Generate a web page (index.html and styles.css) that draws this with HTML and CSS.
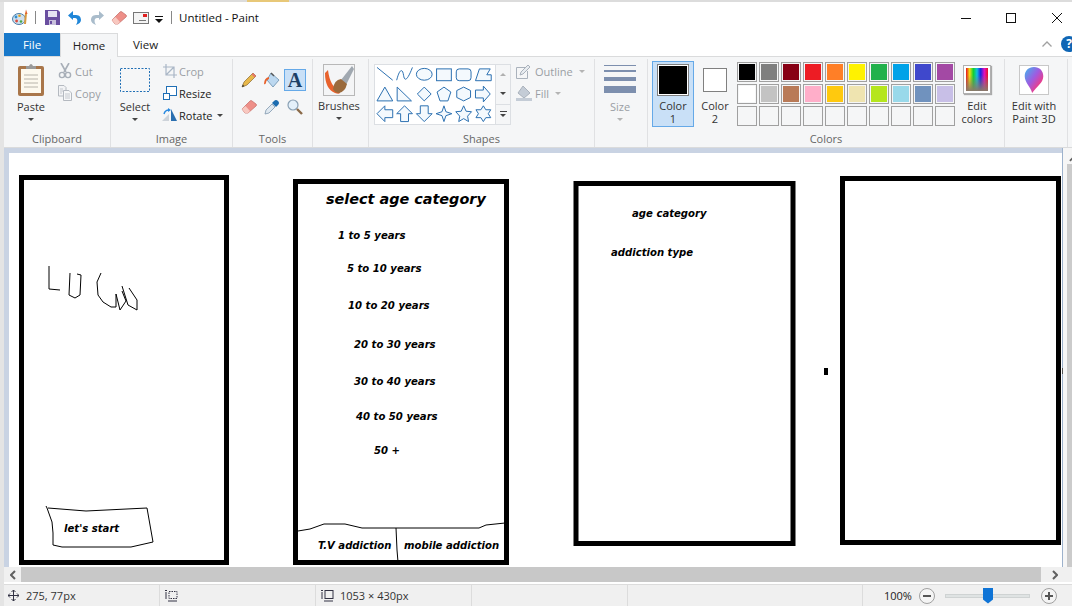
FILE: index.html
```html
<!DOCTYPE html>
<html lang="en">
<head>
  <meta charset="UTF-8">
  <title>Untitled - Paint</title>
  <link rel="stylesheet" href="styles.css">
</head>
<body>

<div class="desktop-strip"><span class="gold"></span></div>

<div class="window">

  <!-- title bar -->
  <div class="titlebar">
    <svg class="qa qa-app" viewBox="0 0 17 17">
      <ellipse cx="7" cy="10" rx="6.5" ry="5.5" fill="#cfe0ee" stroke="#4d7ea8"/>
      <circle cx="4" cy="8" r="1.4" fill="#2f8fd0"/><circle cx="7.5" cy="6.8" r="1.3" fill="#e0a020"/>
      <circle cx="4.6" cy="12" r="1.4" fill="#d8483a"/><circle cx="9" cy="12.5" r="1.3" fill="#4aa84a"/>
      <path d="M13 15 L14 4" stroke="#d89a40" stroke-width="2"/><path d="M13 5 L14 0.5 L15.5 5Z" fill="#e2622c"/>
    </svg>
    <span class="qa-sep"></span>
    <svg class="qa qa-save" viewBox="0 0 15 15">
      <path d="M0 0H13L15 2V15H0Z" fill="#6a4fa0"/>
      <rect x="3" y="1" width="9" height="6" fill="#e6e2f2"/>
      <rect x="4" y="10" width="7" height="5" fill="#c8c0dc"/><rect x="5" y="11" width="2" height="3" fill="#6a4fa0"/>
    </svg>
    <svg class="qa qa-undo" viewBox="0 0 14 15">
      <path d="M1 5 H8 C12 5 13 8 13 10 C13 12 11 14 8 15 C10 12 10 8 7 8 H5 V10 L0 5.5 L5 1 V5" fill="#1f86d8"/>
    </svg>
    <svg class="qa qa-redo" viewBox="0 0 14 15">
      <path d="M13 5 H6 C2 5 1 8 1 10 C1 12 3 14 6 15 C4 12 4 8 7 8 H9 V10 L14 5.5 L9 1 V5" fill="#a9bccb"/>
    </svg>
    <svg class="qa qa-erase" viewBox="0 0 16 14">
      <path d="M1 9 L9 1 Q10 0 11 1 L15 4 Q16 5 15 6 L7 13 H4 Z" fill="#ee8f88" stroke="#c9736e" stroke-width=".8"/>
      <path d="M1 9 L4 13 H7 L9 11 L4.5 6Z" fill="#f8c8c0"/>
    </svg>
    <svg class="qa qa-win" viewBox="0 0 16 12">
      <rect x=".5" y=".5" width="15" height="11" fill="#f4f4f4" stroke="#777"/>
      <rect x="10" y="2" width="4" height="3" fill="#e02020"/><path d="M6 8.5H13" stroke="#777"/>
    </svg>
    <span class="qa-menu"><i></i><b></b></span>
    <span class="qa-sep qa-sep-2"></span>
    <span class="title">Untitled - Paint</span>
    <div class="win-controls">
      <svg class="wc wc-min" viewBox="0 0 10 10"><path d="M0 5.5H10" stroke="#111"/></svg>
      <svg class="wc wc-max" viewBox="0 0 10 10"><rect x=".5" y=".5" width="9" height="9" fill="none" stroke="#111"/></svg>
      <svg class="wc wc-close" viewBox="0 0 10 10"><path d="M0 0L10 10M10 0L0 10" stroke="#111"/></svg>
    </div>
  </div>

  <!-- tabs -->
  <div class="tabs">
    <span class="tab tab-file">File</span>
    <span class="tab tab-home">Home</span>
    <span class="tab tab-view">View</span>
    <svg class="collapse" viewBox="0 0 10 6"><path d="M0.5 5.5L5 1L9.5 5.5" fill="none" stroke="#a0a0a0" stroke-width="1.3"/></svg>
    <span class="help">?</span>
  </div>

  <!-- ribbon -->
  <div class="ribbon">

    <div class="group g-clipboard">
      <div class="group-body">
        <div class="big big-paste">
          <svg class="ic-paste" viewBox="0 0 26 33">
            <rect x="0" y="3" width="26" height="30" rx="2" fill="#a9764a"/>
            <rect x="3" y="6" width="20" height="24" fill="#fdf9ee"/>
            <path d="M6 12H20M6 16H20M6 20H20M6 24H20" stroke="#b8b4aa"/>
            <path d="M8 6V3H11Q13 -1 15 3H18V6Z" fill="#9a9a9a"/>
          </svg>
          <span class="lbl">Paste</span>
          <i class="caret"></i>
        </div>
        <div class="stack">
          <div class="small off">
            <svg class="ic16" viewBox="0 0 16 16">
              <path d="M4 0L9 9M12 0L7 9" stroke="#a8afb8" stroke-width="1.6"/>
              <circle cx="5" cy="12" r="2.6" fill="none" stroke="#a8afb8" stroke-width="1.4"/>
              <circle cx="11" cy="12" r="2.6" fill="none" stroke="#a8afb8" stroke-width="1.4"/>
            </svg>
            <span>Cut</span>
          </div>
          <div class="small off">
            <svg class="ic16" viewBox="0 0 16 16">
              <path d="M1.5 .5H7L9 2.5V11H1.5Z" fill="#f2f3f5" stroke="#b4b9c0"/>
              <path d="M6.5 5.5H12L14.5 8V15.5H6.5Z" fill="#f6f7f8" stroke="#b4b9c0"/>
              <path d="M8 9H13M8 11H13M8 13H13M3 4H6M3 6H6M3 8H5" stroke="#c4c8ce"/>
            </svg>
            <span>Copy</span>
          </div>
        </div>
      </div>
      <div class="group-label">Clipboard</div>
    </div>

    <div class="group g-image">
      <div class="group-body">
        <div class="big big-select">
          <svg class="ic-select" viewBox="0 0 30 24"><rect x=".5" y=".5" width="29" height="23" fill="none" stroke="#1f6fb5" stroke-dasharray="2 1.5"/></svg>
          <span class="lbl">Select</span>
          <i class="caret"></i>
        </div>
        <div class="stack">
          <div class="small off">
            <svg class="ic16" viewBox="0 0 16 16"><path d="M4 1V12H15M1 4H12V15M4 12L12 4" fill="none" stroke="#a9b6c6" stroke-width="1.2"/></svg>
            <span>Crop</span>
          </div>
          <div class="small">
            <svg class="ic16" viewBox="0 0 16 16">
              <rect x="4.5" y="1.5" width="10" height="9" fill="#fff" stroke="#1f6fb5"/>
              <rect x="1.5" y="8.5" width="6" height="6" fill="#fff" stroke="#1f6fb5"/>
            </svg>
            <span>Resize</span>
          </div>
          <div class="small">
            <svg class="ic16" viewBox="0 0 16 16">
              <path d="M9 2L15 14H9Z" fill="#2a6fb0"/><path d="M0 14L7 7V14Z" fill="#cdd3da"/>
              <path d="M2 7Q3 3 7 3" fill="none" stroke="#2a8ae0" stroke-width="1.4"/><path d="M6 1L9 3L6 5Z" fill="#2a8ae0"/>
            </svg>
            <span>Rotate</span>
            <i class="caret"></i>
          </div>
        </div>
      </div>
      <div class="group-label">Image</div>
    </div>

    <div class="group g-tools">
      <div class="group-body tool-grid">
        <span class="tool">
          <svg class="ic16" viewBox="0 0 16 16">
            <path d="M1 15L3 10L12 1L15 4L6 13Z" fill="#e8b84a" stroke="#8a6a30" stroke-width=".7"/>
            <path d="M12 1L15 4L13.6 5.4L10.6 2.4Z" fill="#e8766a"/><path d="M1 15L1.8 12.6L3.4 14.2Z" fill="#333"/>
          </svg>
        </span>
        <span class="tool">
          <svg class="ic16" viewBox="0 0 16 16">
            <path d="M7 1L15 8L9 15L3 8Z" fill="#bcd8f0" stroke="#7ea0bc"/>
            <path d="M7 1L10 4" stroke="#555" stroke-width="1.4"/>
            <path d="M5 5Q0 6 0 12Q1 13 2 11Q2 8 5 7Z" fill="#e8622c"/>
          </svg>
        </span>
        <span class="tool tool-on">A</span>
        <span class="tool">
          <svg class="ic16" viewBox="0 0 16 14">
            <path d="M1 9 L9 1 Q10 0 11 1 L15 4 Q16 5 15 6 L7 13 H4 Z" fill="#ee8f88" stroke="#c9736e" stroke-width=".8"/>
            <path d="M1 9 L4 13 H7 L9 11 L4.5 6Z" fill="#f8c8c0"/>
          </svg>
        </span>
        <span class="tool">
          <svg class="ic16" viewBox="0 0 16 16">
            <path d="M1 15L2 11L8 5L11 8L5 14Z" fill="#dfe8f0" stroke="#8098ae" stroke-width=".8"/>
            <path d="M8 4L10 2Q12 0 14 2Q16 4 14 6L12 8L8 4Z" fill="#1c6cb0"/>
          </svg>
        </span>
        <span class="tool">
          <svg class="ic16" viewBox="0 0 16 16">
            <circle cx="6" cy="6" r="5" fill="#e4f0fa" stroke="#8aa0b4" stroke-width="1.2"/>
            <path d="M10 10L15 15" stroke="#8a6a48" stroke-width="2.4"/>
          </svg>
        </span>
      </div>
      <div class="group-label">Tools</div>
    </div>

    <div class="group g-brushes">
      <div class="group-body">
        <div class="big big-brushes">
          <svg class="ic-brushes" viewBox="0 0 32 32">
            <rect x=".5" y=".5" width="31" height="31" fill="#f4f5f6" stroke="#b8b8b8"/>
            <path d="M2 9Q2 25 12 29Q18 31 17 27Q7 23 5 6Z" fill="#e8622c"/>
            <path d="M18 16L29 2L31 5L23 21Z" fill="#a0a8b0"/>
            <path d="M10 25Q11 16 18 15L24 20Q22 28 16 29Q12 29 10 25Z" fill="#9a6a3c"/>
          </svg>
          <span class="lbl">Brushes</span>
          <i class="caret"></i>
        </div>
      </div>
      <div class="group-label"></div>
    </div>

    <div class="group g-shapes">
      <div class="group-body">
        <div class="shape-box">
          <svg class="shape-grid" viewBox="375 64 120 60">
            <path d="M377 67L393 80"/>
            <path d="M397 80C400 68 403 68 404 75S408 80 413 67"/>
            <ellipse cx="425" cy="74" rx="8" ry="6"/>
            <rect x="437.5" y="68.5" width="15" height="12"/>
            <rect x="457.5" y="68.5" width="15" height="12" rx="3"/>
            <path d="M477 80.5L481 68.5H492L488.5 74.5H493V80.5Z"/>
            <path d="M385 87L377 101H393Z"/>
            <path d="M397.5 87V101H412Z"/>
            <path d="M425 87L432 94L425 101L418 94Z"/>
            <path d="M445 87L452 92L449 101H441L438 92Z"/>
            <path d="M465 87L472 90.5V97.5L465 101L458 97.5V90.5Z"/>
            <path d="M477 90H485V86L492 94L485 102V98H477Z"/>
            <path d="M393 110H385V106L377 114L385 122V118H393Z"/>
            <path d="M405 106L413 114H409V122H401V114H397Z"/>
            <path d="M421 106H429V114H433L425 122L417 114H421Z"/>
            <path d="M445 106L447 112L453 114L447 116L445 122L443 116L437 114L443 112Z"/>
            <path d="M465 106L467.5 111.5L473 112L469 116.5L470 122L465 119L460 122L461 116.5L457 112L462.5 111.5Z"/>
            <path d="M485 106L487.5 110H492.5L490 114L492.5 118H487.5L485 122L482.5 118H477.5L480 114L477.5 110H482.5Z"/>
          </svg>
          <div class="shape-scroll">
            <span class="ss"><i class="caret caret-up"></i></span>
            <span class="ss"><i class="caret"></i></span>
            <span class="ss ss-more"><b></b><i class="caret"></i></span>
          </div>
        </div>
        <div class="stack stack-shapes">
          <div class="small off">
            <svg class="ic16" viewBox="0 0 16 16">
              <path d="M.5 4.5H9M.5 4.5V15.5H11.5V8" fill="none" stroke="#aab2bc"/>
              <path d="M4 12L5 9L12 2L14 4L7 11Z" fill="#e8ecf0" stroke="#aab2bc"/>
            </svg>
            <span>Outline</span>
            <i class="caret"></i>
          </div>
          <div class="small off">
            <svg class="ic16" viewBox="0 0 16 16">
              <path d="M7 1L14 8L8 13L2 8Z" fill="#c4ccd6" stroke="#aab2bc"/>
              <rect x="0" y="13" width="16" height="3" fill="#c4ccd6"/>
            </svg>
            <span>Fill</span>
            <i class="caret"></i>
          </div>
        </div>
      </div>
      <div class="group-label">Shapes</div>
    </div>

    <div class="group g-size">
      <div class="group-body">
        <div class="big big-size off">
          <div class="size-lines"><i class="s1"></i><i class="s2"></i><i class="s3"></i><i class="s4"></i></div>
          <span class="lbl">Size</span>
          <i class="caret"></i>
        </div>
      </div>
      <div class="group-label"></div>
    </div>

    <div class="group g-colors">
      <div class="group-body">
        <div class="color-btn color-on">
          <span class="sw sw-1"><i></i></span>
          <span class="lbl">Color<br>1</span>
        </div>
        <div class="color-btn color-2">
          <span class="sw sw-2"><i></i></span>
          <span class="lbl">Color<br>2</span>
        </div>
        <div class="palette">
          <span class="cell"><i class="c1"></i></span><span class="cell"><i class="c2"></i></span><span class="cell"><i class="c3"></i></span><span class="cell"><i class="c4"></i></span><span class="cell"><i class="c5"></i></span><span class="cell"><i class="c6"></i></span><span class="cell"><i class="c7"></i></span><span class="cell"><i class="c8"></i></span><span class="cell"><i class="c9"></i></span><span class="cell"><i class="c10"></i></span>
          <span class="cell"><i class="c11"></i></span><span class="cell"><i class="c12"></i></span><span class="cell"><i class="c13"></i></span><span class="cell"><i class="c14"></i></span><span class="cell"><i class="c15"></i></span><span class="cell"><i class="c16"></i></span><span class="cell"><i class="c17"></i></span><span class="cell"><i class="c18"></i></span><span class="cell"><i class="c19"></i></span><span class="cell"><i class="c20"></i></span>
          <span class="cell"></span><span class="cell"></span><span class="cell"></span><span class="cell"></span><span class="cell"></span><span class="cell"></span><span class="cell"></span><span class="cell"></span><span class="cell"></span><span class="cell"></span>
        </div>
        <div class="big big-edit">
          <span class="rainbow"><i></i></span>
          <span class="lbl">Edit<br>colors</span>
        </div>
      </div>
      <div class="group-label">Colors</div>
    </div>

    <div class="group g-3d">
      <div class="group-body">
        <div class="big big-3d">
          <span class="p3d-box">
            <svg class="ic-3d" viewBox="0 0 20 28">
              <defs>
                <linearGradient id="drop" x1="0" y1="0" x2="1" y2="1">
                  <stop offset="0" stop-color="#3cb8ee"/><stop offset=".45" stop-color="#a05ae0"/>
                  <stop offset=".75" stop-color="#ee3c88"/><stop offset="1" stop-color="#f8a030"/>
                </linearGradient>
              </defs>
              <path d="M10 0C16 0 20 4 20 10C20 17 13 21 8 28C7 22 0 17 0 10C0 4 4 0 10 0Z" fill="url(#drop)"/>
            </svg>
          </span>
          <span class="lbl">Edit with<br>Paint 3D</span>
        </div>
      </div>
      <div class="group-label"></div>
    </div>

  </div>

  <!-- canvas area -->
  <div class="workspace">
    <div class="canvas-pane">
      <div class="canvas">
        <svg class="drawing" width="1053" height="430" viewBox="9 153 1053 430">
          <g class="frames">
            <rect x="21.5" y="177.5" width="205" height="385"/>
            <rect x="295.5" y="181.5" width="211" height="381"/>
            <rect x="576" y="183.5" width="217" height="360"/>
            <rect x="842.5" y="178.5" width="216" height="364"/>
          </g>
          <rect class="tick" x="824" y="368" width="4" height="7"/>
          <g class="pencil">
            <path d="M49 266V289L60 290"/>
            <path d="M70 273L69 295L75 298L80 295L81 275L77 274"/>
            <path d="M101 273L97 282L98 295L103 302L111 307L116 307L116 294L120 310L126 301L122 291M122 286L128 305L137 310L137 300L129 288"/>
            <path d="M46 506L47 508L52 522L53 533L53 545L62 547L131 547L153 542L147 508L86 511L48 508"/>
            <path d="M298 531L310 529L324 524L345 524L362 528L479 528L486 525L505 523"/>
            <path d="M396 528L397 550L398 562"/>
          </g>
          <text class="big-text" x="326" y="204">select age category</text>
          <g class="sk-text">
            <text x="338" y="239">1 to 5 years</text>
            <text x="347" y="272">5 to 10 years</text>
            <text x="348" y="309">10 to 20 years</text>
            <text x="354" y="348">20 to 30 years</text>
            <text x="354" y="385">30 to 40 years</text>
            <text x="356" y="420">40 to 50 years</text>
            <text x="374" y="454">50 +</text>
            <text x="64" y="532">let's start</text>
            <text x="318" y="549">T.V addiction</text>
            <text x="404" y="549">mobile addiction</text>
            <text x="632" y="217">age category</text>
            <text x="611" y="256">addiction type</text>
          </g>
        </svg>
      </div>
    </div>
    <span class="handle"></span>
    <div class="vscroll">
      <svg class="arrow-up" viewBox="0 0 10 6"><path d="M1 5L5 1L9 5" fill="none" stroke="#606060" stroke-width="2"/></svg>
      <span class="vthumb"></span>
    </div>
  </div>

  <div class="hscroll">
    <span class="harrow">
      <svg viewBox="0 0 6 10"><path d="M5 1L1 5L5 9" fill="none" stroke="#606060" stroke-width="2"/></svg>
    </span>
    <span class="hthumb"></span>
    <span class="harrow harrow-r">
      <svg viewBox="0 0 6 10"><path d="M1 1L5 5L1 9" fill="none" stroke="#606060" stroke-width="2"/></svg>
    </span>
  </div>

  <!-- status bar -->
  <div class="status">
    <div class="st st-pos">
      <svg class="st-ic" viewBox="0 0 11 11"><path d="M5.5 0V11M0 5.5H11M3.5 2L5.5 0L7.5 2M3.5 9L5.5 11L7.5 9M2 3.5L0 5.5L2 7.5M9 3.5L11 5.5L9 7.5" fill="none" stroke="#334"/></svg>
      <span>275, 77px</span>
    </div>
    <div class="st st-sel">
      <svg class="st-ic2" viewBox="0 0 13 13"><path d="M1 3V10M0 2L1 1L2 2" fill="none" stroke="#334"/><rect x="4" y="2.5" width="8" height="7" fill="none" stroke="#334" stroke-dasharray="1.5 1"/><path d="M3 12H12" stroke="#334"/></svg>
    </div>
    <div class="st st-size">
      <svg class="st-ic2" viewBox="0 0 13 13"><path d="M1 3V10M0 2L1 1L2 2" fill="none" stroke="#334"/><rect x="4" y="1.5" width="8" height="8" fill="none" stroke="#334"/><path d="M3 12H12" stroke="#334"/></svg>
      <span>1053 × 430px</span>
    </div>
    <div class="st st-empty"></div>
    <div class="st st-empty2"></div>
    <div class="st st-zoom">
      <span class="pct">100%</span>
      <svg class="zb" viewBox="0 0 16 16"><circle cx="8" cy="8" r="7.5" fill="#f4f4f4" stroke="#a0a0a0"/><path d="M4 8H12" stroke="#555" stroke-width="2"/></svg>
      <span class="slider"><i></i></span>
      <svg class="zb" viewBox="0 0 16 16"><circle cx="8" cy="8" r="7.5" fill="#f4f4f4" stroke="#a0a0a0"/><path d="M4 8H12M8 4V12" stroke="#555" stroke-width="2"/></svg>
    </div>
  </div>

</div>

</body>
</html>
```

FILE: styles.css
```css
* {
  box-sizing: border-box;
}
html, body {
  margin: 0;
  height: 606px;
  overflow: hidden;
}
body {
  background: #e4e4e4;
  font-family: "Open Sans", "Noto Sans", sans-serif;
  font-size: 11.5px;
  color: #222;
}
i {
  display: block;
}

.desktop-strip {
  height: 2px;
  background: #dcdcdc;
  display: flex;
}
.gold {
  width: 42px;
  margin-left: 247px;
  background: #e8c878;
}

.window {
  margin-left: 4px;
  height: 604px;
  background: #fff;
  display: flex;
  flex-direction: column;
}

/* title bar */
.titlebar {
  height: 31px;
  display: flex;
  align-items: center;
  padding-left: 8px;
  flex: none;
}
.qa {
  display: block;
  flex: none;
}
.qa-app { width: 17px; height: 17px; }
.qa-save { width: 15px; height: 15px; margin-left: 9px; }
.qa-undo { width: 14px; height: 15px; margin-left: 8px; }
.qa-redo { width: 14px; height: 15px; margin-left: 8px; }
.qa-erase { width: 16px; height: 14px; margin-left: 7px; }
.qa-win { width: 16px; height: 12px; margin-left: 6px; }
.qa-sep {
  width: 1px;
  height: 13px;
  background: #888;
  margin-left: 6px;
}
.qa-sep-2 {
  margin-left: 8px;
}
.qa-menu {
  width: 8px;
  margin-left: 6px;
  padding-top: 4px;
}
.qa-menu i {
  height: 1px;
  background: #111;
  margin-bottom: 2px;
}
.qa-menu b {
  display: block;
  width: 0;
  border: 4px solid transparent;
  border-top: 4px solid #111;
  border-bottom: 0;
}
.title {
  margin-left: 7px;
  margin-bottom: 1px;
  font-size: 11.5px;
  color: #111;
}
.win-controls {
  margin-left: auto;
  display: flex;
  align-items: center;
  padding-right: 10px;
}
.wc {
  width: 10px;
  height: 10px;
  display: block;
}
.wc-min { margin-right: 35px; }
.wc-max { margin-right: 36px; }

/* tabs */
.tabs {
  height: 24px;
  display: flex;
  align-items: flex-end;
  border-bottom: 1px solid #dadbdc;
  flex: none;
}
.tab {
  height: 23px;
  line-height: 23px;
  text-align: center;
  font-size: 11.5px;
}
.tab-file {
  width: 56px;
  background: #1979ca;
  color: #fff;
}
.tab-home {
  width: 58px;
  height: 24px;
  margin-bottom: -1px;
  background: #f5f6f7;
  border: 1px solid #dadbdc;
  border-bottom: 0;
}
.tab-view {
  width: 55px;
}
.collapse {
  width: 10px;
  height: 6px;
  margin-left: auto;
  margin-bottom: 9px;
  margin-right: 9px;
}
.help {
  width: 16px;
  height: 16px;
  border-radius: 50%;
  background: #0f66b5;
  color: #fff;
  font-weight: 700;
  font-size: 12px;
  line-height: 16px;
  text-align: center;
  margin-right: -5px;
  margin-bottom: 4px;
}

/* ribbon */
.ribbon {
  height: 91px;
  display: flex;
  background: #f5f6f7;
  border-bottom: 1px solid #dadbdc;
  flex: none;
}
.group {
  display: flex;
  flex-direction: column;
  height: 88px;
  margin-top: 2px;
  border-right: 1px solid #e0e1e3;
  flex: none;
}
.g-clipboard { width: 107px; }
.g-image { width: 122px; }
.g-tools { width: 80px; }
.g-brushes { width: 56px; }
.g-shapes { width: 226px; }
.g-size { width: 53px; }
.g-colors { width: 357px; }
.g-3d { width: 63px; }

.group-body {
  height: 71px;
  display: flex;
}
.group-label {
  height: 17px;
  line-height: 17px;
  text-align: center;
  color: #666;
  font-size: 11px;
}

.big {
  display: flex;
  flex-direction: column;
  align-items: center;
  flex: none;
}
.lbl {
  display: block;
  line-height: 13px;
  text-align: center;
  color: #333;
  font-size: 11px;
}
.caret {
  width: 0;
  border: 3px solid transparent;
  border-top: 3px solid #444;
  border-bottom: 0;
}
.big > .caret {
  margin-top: 5px;
}
.caret-up {
  border-top: 0;
  border-bottom: 3px solid #b0b0b0;
}
.off .lbl, .off span {
  color: #9a9ea4;
}
.off .caret {
  border-top-color: #b4b4b4;
}

.stack {
  padding-top: 1px;
  display: flex;
  flex-direction: column;
}
.small {
  display: flex;
  align-items: center;
  height: 22px;
  gap: 2px;
  font-size: 11px;
}
.small .caret {
  margin-left: 3px;
}
.ic16 {
  width: 16px;
  height: 16px;
  display: block;
  flex: none;
}

/* clipboard */
.big-paste {
  width: 52px;
  margin-left: 1px;
  padding-top: 4px;
}
.ic-paste {
  width: 26px;
  height: 33px;
  margin-bottom: 4px;
}

/* image */
.big-select {
  width: 48px;
  margin-left: 0;
  padding-top: 9px;
}
.ic-select {
  width: 30px;
  height: 24px;
  margin-bottom: 8px;
}
.g-image .stack {
  margin-left: 3px;
}
.g-image .small {
  gap: 1px;
}

/* tools */
.tool-grid {
  display: grid;
  grid-template-columns: 22px 22px 22px;
  grid-auto-rows: 22px;
  gap: 5px 1px;
  padding: 10px 0 0 5px;
}
.tool {
  display: flex;
  align-items: center;
  justify-content: center;
}
.tool-on {
  background: #c9e0f7;
  border: 1px solid #65a9e8;
  font-family: "Liberation Serif", serif;
  font-weight: 700;
  font-size: 20px;
  color: #1d3f66;
}

/* brushes */
.big-brushes {
  width: 52px;
  padding-top: 5px;
}
.ic-brushes {
  width: 32px;
  height: 32px;
  margin-bottom: 3px;
}

/* shapes */
.shape-box {
  width: 137px;
  height: 61px;
  margin: 5px 0 0 5px;
  display: flex;
  background: #fff;
  border: 1px solid #dcdfe3;
}
.shape-grid {
  width: 120px;
  height: 60px;
  margin-top: -1px;
  fill: #f4f9fd;
  stroke: #2a6fb0;
  stroke-width: 1;
}
.shape-grid path:first-child {
  fill: none;
}
.shape-grid path:nth-child(2) {
  fill: none;
}
.shape-scroll {
  width: 15px;
  margin-left: 2px;
  background: #f5f6f7;
  border-left: 1px solid #dcdfe3;
  display: flex;
  flex-direction: column;
}
.ss {
  flex: 1;
  display: flex;
  flex-direction: column;
  align-items: center;
  justify-content: center;
  gap: 2px;
}
.ss b {
  display: block;
  width: 7px;
  height: 1px;
  background: #444;
}
.ss-more {
  border-top: 1px solid #dcdfe3;
}
.stack-shapes {
  margin-left: 5px;
}
.stack-shapes .small {
  gap: 3px;
}

/* size */
.big-size {
  width: 50px;
  padding-top: 6px;
}
.size-lines {
  width: 32px;
  height: 35px;
}
.size-lines i {
  background: #7d8fae;
}
.s1 { height: 1px; margin-bottom: 4px; }
.s2 { height: 2px; margin-bottom: 5px; }
.s3 { height: 4px; margin-bottom: 5px; }
.s4 { height: 7px; }

/* colors */
.color-btn {
  width: 42px;
  height: 66px;
  margin-left: 4px;
  margin-top: 2px;
  border: 1px solid transparent;
  display: flex;
  flex-direction: column;
  align-items: center;
}
.color-on {
  background: #c9e0f7;
  border-color: #65a9e8;
}
.color-2 {
  width: 36px;
  margin-left: 3px;
}
.sw {
  display: block;
  border: 1px solid #808080;
  padding: 1px;
  background: #fff;
}
.sw-1 {
  width: 32px;
  height: 32px;
  margin-top: 2px;
  margin-bottom: 3px;
}
.sw-1 i {
  height: 100%;
  background: #000;
}
.sw-2 {
  width: 24px;
  height: 24px;
  margin-top: 6px;
  margin-bottom: 7px;
}
.palette {
  display: grid;
  grid-template-columns: repeat(10, 20px);
  grid-auto-rows: 20px;
  gap: 2px;
  margin: 3px 0 0 4px;
  flex: none;
  height: 64px;
}
.cell {
  border: 1px solid #a0a0a0;
  padding: 1px;
  background: #f5f6f7;
}
.cell i {
  height: 100%;
}
.c1 { background: #000000; }
.c2 { background: #7f7f7f; }
.c3 { background: #880015; }
.c4 { background: #ed1c24; }
.c5 { background: #ff7f27; }
.c6 { background: #fff200; }
.c7 { background: #22b14c; }
.c8 { background: #00a2e8; }
.c9 { background: #3f48cc; }
.c10 { background: #a349a4; }
.c11 { background: #ffffff; }
.c12 { background: #c3c3c3; }
.c13 { background: #b97a57; }
.c14 { background: #ffaec9; }
.c15 { background: #ffc90e; }
.c16 { background: #efe4b0; }
.c17 { background: #b5e61d; }
.c18 { background: #99d9ea; }
.c19 { background: #7092be; }
.c20 { background: #c8bfe7; }

.big-edit {
  width: 40px;
  margin-left: 2px;
  padding-top: 6px;
}
.rainbow {
  display: block;
  width: 28px;
  height: 29px;
  padding: 2px;
  background: #fff;
  border: 1px solid #b0b0b0;
  margin-bottom: 5px;
  box-shadow: 1px 1px 1px #aaa;
}
.rainbow i {
  height: 100%;
  background:
    linear-gradient(to bottom, rgba(128,128,128,0) 30%, #8a7a6a 100%),
    linear-gradient(to right, #e81020, #f0e010, #10d030, #10c0e0, #2020e0, #e010c0, #e81020);
}

/* paint 3d */
.big-3d {
  width: 58px;
  padding-top: 6px;
}
.p3d-box {
  display: flex;
  align-items: center;
  justify-content: center;
  width: 30px;
  height: 30px;
  background: #fff;
  border: 1px solid #c8c8c8;
  margin-bottom: 4px;
}
.ic-3d {
  width: 20px;
  height: 26px;
}

/* canvas */
.workspace {
  position: relative;
  height: 419px;
  display: flex;
  flex: none;
}
.canvas-pane {
  width: 1059px;
  background: #c9d3e3;
  padding: 5px 0 0 5px;
  overflow: hidden;
  border-right: 1px solid #9db2cc;
  flex: none;
}
.canvas {
  width: 1053px;
  height: 430px;
  background: #fff;
}
.drawing {
  display: block;
}
.frames rect {
  fill: none;
  stroke: #000;
  stroke-width: 5;
}
.tick {
  fill: #000;
}
.pencil path {
  fill: none;
  stroke: #000;
  stroke-width: 1;
}
.big-text, .sk-text text {
  font-family: "DejaVu Sans", sans-serif;
  font-weight: 700;
  font-style: italic;
  fill: #000;
}
.big-text {
  font-size: 14.4px;
}
.sk-text text {
  font-size: 10.1px;
}
.handle {
  position: absolute;
  left: 1058px;
  top: 220px;
  width: 1px;
  height: 6px;
  background: #555;
}

.vscroll {
  flex: 1;
  background: #f6f6f6;
  display: flex;
  flex-direction: column;
  align-items: center;
}
.arrow-up {
  width: 9px;
  height: 6px;
  margin-top: 8px;
  margin-left: 6px;
  flex: none;
}
.vthumb {
  display: block;
  width: 8px;
  flex: 1;
  margin-top: 2px;
  margin-left: 1px;
  background: #cbcbcb;
}

.hscroll {
  height: 15px;
  display: flex;
  align-items: stretch;
  background: #f0f0f0;
  flex: none;
}
.harrow {
  width: 17px;
  display: flex;
  align-items: center;
  justify-content: center;
  flex: none;
}
.harrow svg {
  width: 6px;
  height: 10px;
}
.harrow-r {
  width: 27px;
  justify-content: flex-start;
  padding-left: 11px;
}
.hthumb {
  width: 1020px;
  background: #c8c8c8;
}

/* status bar */
.status {
  height: 23px;
  margin-top: 2px;
  display: flex;
  align-items: center;
  background: #f0f0f0;
  border-top: 1px solid #dcdcdc;
  flex: none;
  font-size: 11px;
  color: #333;
}
.st {
  height: 100%;
  display: flex;
  align-items: center;
  padding-bottom: 1px;
  border-right: 1px solid #dcdcdc;
  flex: none;
}
.st-pos { width: 156px; padding-left: 4px; gap: 7px; }
.st-sel { width: 156px; padding-left: 5px; }
.st-size { width: 156px; padding-left: 5px; gap: 6px; }
.st-empty { width: 156px; }
.st-empty2 { width: 235px; }
.st-zoom {
  border-right: 0;
  padding-left: 21px;
}
.st-ic {
  width: 11px;
  height: 11px;
}
.st-ic2 {
  width: 13px;
  height: 13px;
}
.pct {
  width: 35px;
  color: #222;
}
.zb {
  width: 16px;
  height: 16px;
  display: block;
}
.slider {
  display: block;
  position: relative;
  width: 85px;
  height: 4px;
  margin: 0 11px 0 10px;
  background: #dfe3e3;
  border: 1px solid #cfd3d3;
}
.slider i {
  position: absolute;
  left: 37px;
  top: -7px;
  width: 10px;
  height: 16px;
  background: #0f74d6;
  clip-path: polygon(0 0, 100% 0, 100% 75%, 50% 100%, 0 75%);
}
```
